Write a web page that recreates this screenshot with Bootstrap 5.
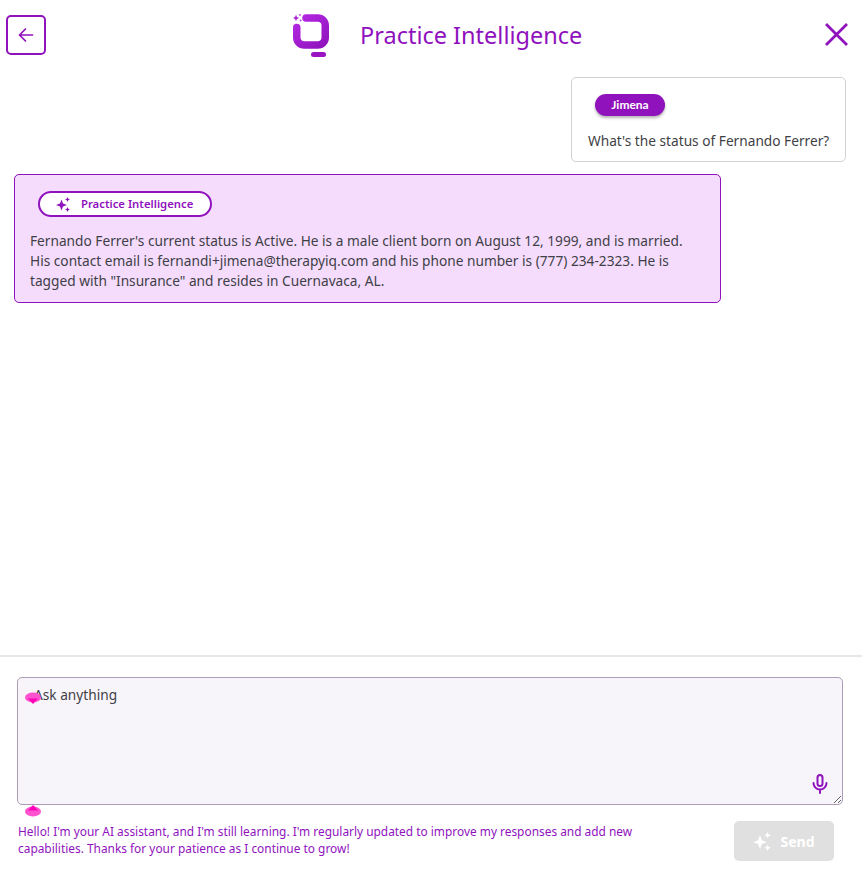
<!DOCTYPE html>
<html lang="en">
<head>
    <meta charset="UTF-8">
    <meta name="viewport" content="width=device-width, initial-scale=1.0">
    <title>Practice Intelligence</title>
    <link href="https://cdn.jsdelivr.net/npm/bootstrap@5.3.0/dist/css/bootstrap.min.css" rel="stylesheet">
    <style>
        body {
            font-family: "Noto Sans", "Open Sans", sans-serif;
            font-size: 13.7px;
            color: #3f3f46;
            background: #fff;
        }
        .pi-shell { height: 888px; }
        .pi-header { height: 70px; padding: 15px 14px 0 6px; }
        .pi-back {
            width: 40px; height: 40px;
            border: 2px solid #8f12bd; border-radius: 5px;
            background: #fff; padding: 0;
        }
        .pi-brand { margin-left: 247px; margin-top: -1px; }
        .pi-title { font-size: 23.5px; color: #8f12bd; margin: 0 0 0 31px; font-weight: 400; white-space: nowrap; }
        .pi-close { background: none; border: 0; padding: 0; margin: 8px 0 0 auto; line-height: 0; }
        .pi-thread { padding: 7px 16px 0 14px; gap: 12px; }
        .pi-user-msg {
            width: 275px; height: 85px; margin-left: auto;
            border: 1px solid #d1d1d1; border-radius: 5px; padding: 16px 15px 0 16px;
        }
        .pi-user-chip {
            width: 70px; height: 22px; margin-left: 7px;
            background: #8f12bd; color: #fff; border-radius: 11px;
            font: 700 12px/22px "Lato", sans-serif; text-align: center;
            box-shadow: 0 2px 3px rgba(0,0,0,.3);
        }
        .pi-user-text { margin: 15px 0 0; white-space: nowrap; }
        .pi-ai-msg {
            width: 707px; height: 129px;
            background: #f5dcfd; border: 1px solid #8f12bd; border-radius: 5px;
            padding: 16px 15px 0 15px;
        }
        .pi-ai-chip {
            width: 174px; height: 26px; margin-left: 8px;
            background: #fff; border: 2px solid #8f12bd; border-radius: 13px;
            color: #8f12bd; font-size: 11.3px; font-weight: 600;
            padding-left: 16px; gap: 10px;
        }
        .pi-ai-text { margin: 14px 0 0; line-height: 20px; }
        .pi-footer {
            height: 233px;
            border-top: 2px solid #e6e6e6;
            padding: 20px 19px 0 17px;
        }
        .pi-input-wrap { position: relative; height: 128px; }
        .pi-input {
            width: 100%; height: 128px; display: block;
            background: #f8f5fa; border: 1px solid #ab9db5; border-radius: 5px;
            padding: 7px 16px; color: #3f3f46; font-size: 13.7px; line-height: 20px;
        }
        .pi-input::placeholder { color: #3f3f46; opacity: 1; }
        .pi-mic { position: absolute; right: 15px; bottom: 11px; line-height: 0; }
        .pi-drop { position: absolute; left: 8px; width: 16px; height: 13px; }
        .pi-drop-top { top: 15px; }
        .pi-drop-bottom { top: 127px; }
        .pi-bottom { padding-top: 16px; }
        .pi-note { width: 660px; margin: 2px 0 0 1px; font-size: 11.9px; line-height: 17px; color: #8f12bd; }
        .pi-send {
            width: 100px; height: 40px; margin: 0 9px 0 auto;
            background: #e0e0e0; border: 0; border-radius: 5px;
            color: #fff; font-weight: 700; font-size: 14px; gap: 8px;
        }
    </style>
</head>
<body>
    <div class="pi-shell d-flex flex-column">
        <header class="pi-header d-flex align-items-start">
            <button class="pi-back d-flex align-items-center justify-content-center" aria-label="Back">
                <svg width="18" height="18" viewBox="0 0 18 18" fill="none" stroke="#8f12bd" stroke-width="1.7" stroke-linecap="round" stroke-linejoin="round"><path d="M15.5 9H2.5M8.5 3L2.5 9l6 6"/></svg>
            </button>
            <div class="pi-brand d-flex align-items-center">
                <svg width="36" height="43" viewBox="0 0 36 43">
                    <defs><linearGradient id="logoGrad" gradientUnits="userSpaceOnUse" x1="4" y1="0" x2="34" y2="36"><stop offset="0" stop-color="#b82ae6"/><stop offset="1" stop-color="#8a10b8"/></linearGradient></defs>
                    <path d="M3.750 13.500v10a7.500 7.500 0 0 0 7.500 7.500h13.500a7.500 7.500 0 0 0 7.500-7.500v-12a7.500 7.500 0 0 0-7.500-7.500H13" fill="none" stroke="url(#logoGrad)" stroke-width="7.500" stroke-linecap="round"/>
                    <rect x="18" y="38" width="15" height="5" rx="2.500" fill="#9a14c4"/>
                    <path d="M3 .8l.9 2.300 2.300.9-2.300.9L3 7.200l-.9-2.300L-.2 4l2.300-.9zM7 -.4l.4 1 1 .4-1 .4L7 2.600l-.4-1.200-1-.4 1-.4zM7.700 5l.4 1 1 .4-1 .4-.4 1.200-.4-1.200-1-.4 1-.4z" fill="#a81fd6"/>
                </svg>
                <h1 class="pi-title">Practice Intelligence</h1>
            </div>
            <button class="pi-close" aria-label="Close">
                <svg width="23" height="23" viewBox="0 0 23 23" stroke="#8f12bd" stroke-width="2.800" stroke-linecap="square"><path d="M2 2l19 19M21 2L2 21"/></svg>
            </button>
        </header>

        <main class="pi-thread flex-grow-1 d-flex flex-column">
            <div class="pi-user-msg">
                <div class="pi-user-chip">Jimena</div>
                <p class="pi-user-text">What's the status of Fernando Ferrer?</p>
            </div>
            <div class="pi-ai-msg">
                <div class="pi-ai-chip d-flex align-items-center">
                    <svg width="15" height="15" viewBox="0 0 15 15" fill="#8f12bd"><path d="M5.500 2.500l1.500 4 4 1.500-4 1.500-1.500 4-1.500-4L0 8l4-1.500zM11.500 0l.8 1.700 1.700.8-1.700.8-.8 1.700-.8-1.700L9 2.500l1.700-.8zM11.500 10l.8 1.700 1.700.8-1.700.8-.8 1.700-.8-1.700-1.700-.8 1.700-.8z"/></svg>
                    <span>Practice Intelligence</span>
                </div>
                <p class="pi-ai-text">Fernando Ferrer's current status is Active. He is a male client born on August 12, 1999, and is married. His contact email is fernandi+jimena@therapyiq.com and his phone number is (777) 234-2323. He is tagged with "Insurance" and resides in Cuernavaca, AL.</p>
            </div>
        </main>

        <footer class="pi-footer">
            <div class="pi-input-wrap">
                <textarea class="pi-input" placeholder="Ask anything"></textarea>
                <svg class="pi-drop pi-drop-top" viewBox="0 0 16 13"><ellipse cx="8" cy="5.500" rx="8" ry="5" fill="#ff52cf"/><path d="M3 6.500h10L8 12z" fill="#ff00b8"/></svg>
                <svg class="pi-drop pi-drop-bottom" viewBox="0 0 16 13"><ellipse cx="8" cy="7.500" rx="8" ry="5" fill="#ff52cf"/><path d="M3 6.500h10L8 1z" fill="#ff00b8"/></svg>
                <span class="pi-mic">
                    <svg width="16" height="20" viewBox="0 0 16 20" fill="none" stroke="#8f12bd" stroke-width="2" stroke-linecap="round"><rect x="5.500" y="1" width="5" height="11" rx="2.500"/><path d="M1.500 9a6.500 6.500 0 0 0 13 0M8 15.500V19"/></svg>
                </span>
            </div>
            <div class="pi-bottom d-flex align-items-start">
                <p class="pi-note">Hello! I'm your AI assistant, and I'm still learning. I'm regularly updated to improve my responses and add new capabilities. Thanks for your patience as I continue to grow!</p>
                <button class="pi-send d-flex align-items-center justify-content-center" disabled>
                    <svg width="19" height="19" viewBox="0 0 15 15" fill="#fff"><path d="M5.500 2.500l1.500 4 4 1.500-4 1.500-1.500 4-1.500-4L0 8l4-1.500zM11.500 0l.8 1.700 1.700.8-1.700.8-.8 1.700-.8-1.700L9 2.500l1.700-.8zM11.500 10l.8 1.700 1.700.8-1.700.8-.8 1.700-.8-1.700-1.700-.8 1.700-.8z"/></svg>
                    <span>Send</span>
                </button>
            </div>
        </footer>
    </div>
    <script src="https://cdn.jsdelivr.net/npm/bootstrap@5.3.0/dist/js/bootstrap.bundle.min.js"></script>
</body>
</html>
